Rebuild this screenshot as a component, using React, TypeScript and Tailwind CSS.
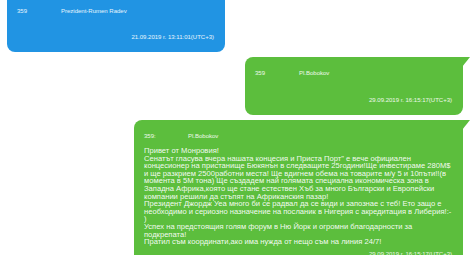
const BODY = [
  'Привет от Монровия!',
  'Сенатът гласува вчера нашата концесия и Приста Порт" е вече официален',
  'концесионер на пристанище Бюкянън в следващите 25години!Ще инвестираме 280M$',
  'и ще разкрием 2500работни места! Ще вдигнем обема на товарите м/у 5 и 10пъти!!(в',
  'момента в 5М тона) Ще създадем най голямата специална икономическа зона в',
  'Западна Африка,която ще стане естествен Хъб за много Български и Европейски',
  'компании решили да стъпят на Африканския пазар!',
  'Президент Джордж Уеа много би се радвал да се види и запознае с теб! Ето защо е',
  'необходимо и сериозно назначение на посланик в Нигерия с акредитация в Либерия!:-',
  ')',
  'Успех на предстоящия голям форум в Ню Йорк и огромни благодарности за',
  'подкрепата!',
  'Пратил съм координати,ако има нужда от нещо съм на линия 24/7!',
];

function Tail() {
  return (
    <svg className="absolute right-0 top-0" width="8" height="10" viewBox="0 0 8 10">
      <path d="M0 0 L8 0 L0 10 Z" fill="#5cbe3d" />
    </svg>
  );
}

function Header({ num, name }: { num: string; name: string }) {
  return (
    <div className="flex text-[6px] leading-[7px] text-white/90">
      <span className="w-[44px]">{num}</span>
      <span>{name}</span>
    </div>
  );
}

export default function App() {
  return (
    <div className="w-[470px] h-[255px] overflow-hidden bg-white font-['Liberation_Sans',Arial,sans-serif] flex flex-col">
      <div className="shrink-0 ml-[7px] mt-[-6px] w-[218px] h-[58px] rounded-b-[8px] bg-[#2194e3] flex flex-col justify-between pl-[10px] pr-[11px] pt-[14px] pb-[11px]">
        <Header num="359" name="Prezident-Rumen Radev" />
        <div className="text-right text-[6px] leading-[7px] text-white/90">21.09.2019 г. 13:11:01(UTC+3)</div>
      </div>

      <div className="shrink-0 relative self-end mt-[5px] pr-[7px]">
        <div className="w-[218px] h-[58px] rounded-[8px] rounded-tr-none bg-[#5cbe3d] flex flex-col justify-between pl-[10px] pr-[11px] pt-[13px] pb-[11px]">
          <Header num="359" name="Pl.Bobokov" />
          <div className="text-right text-[6px] leading-[7px] text-white/90">29.09.2019 г. 16:15:17(UTC+3)</div>
        </div>
        <Tail />
      </div>

      <div className="shrink-0 relative self-end mt-[5px] pr-[7px]">
        <div className="w-[329px] rounded-[8px] rounded-tr-none bg-[#5cbe3d] pl-[10px] pr-[11px] pt-[13px] pb-[8px]">
          <Header num="359:" name="Pl.Bobokov" />
          <div className="mt-[7px] text-[7.6px] leading-[7.6px] text-white/95">
            {BODY.map((l, i) => (
              <div key={i} className="whitespace-nowrap">{l}</div>
            ))}
          </div>
          <div className="mt-[5px] text-right text-[6px] leading-[7px] text-white/90">29.09.2019 г. 16:15:17(UTC+3)</div>
        </div>
        <Tail />
      </div>
    </div>
  );
}
